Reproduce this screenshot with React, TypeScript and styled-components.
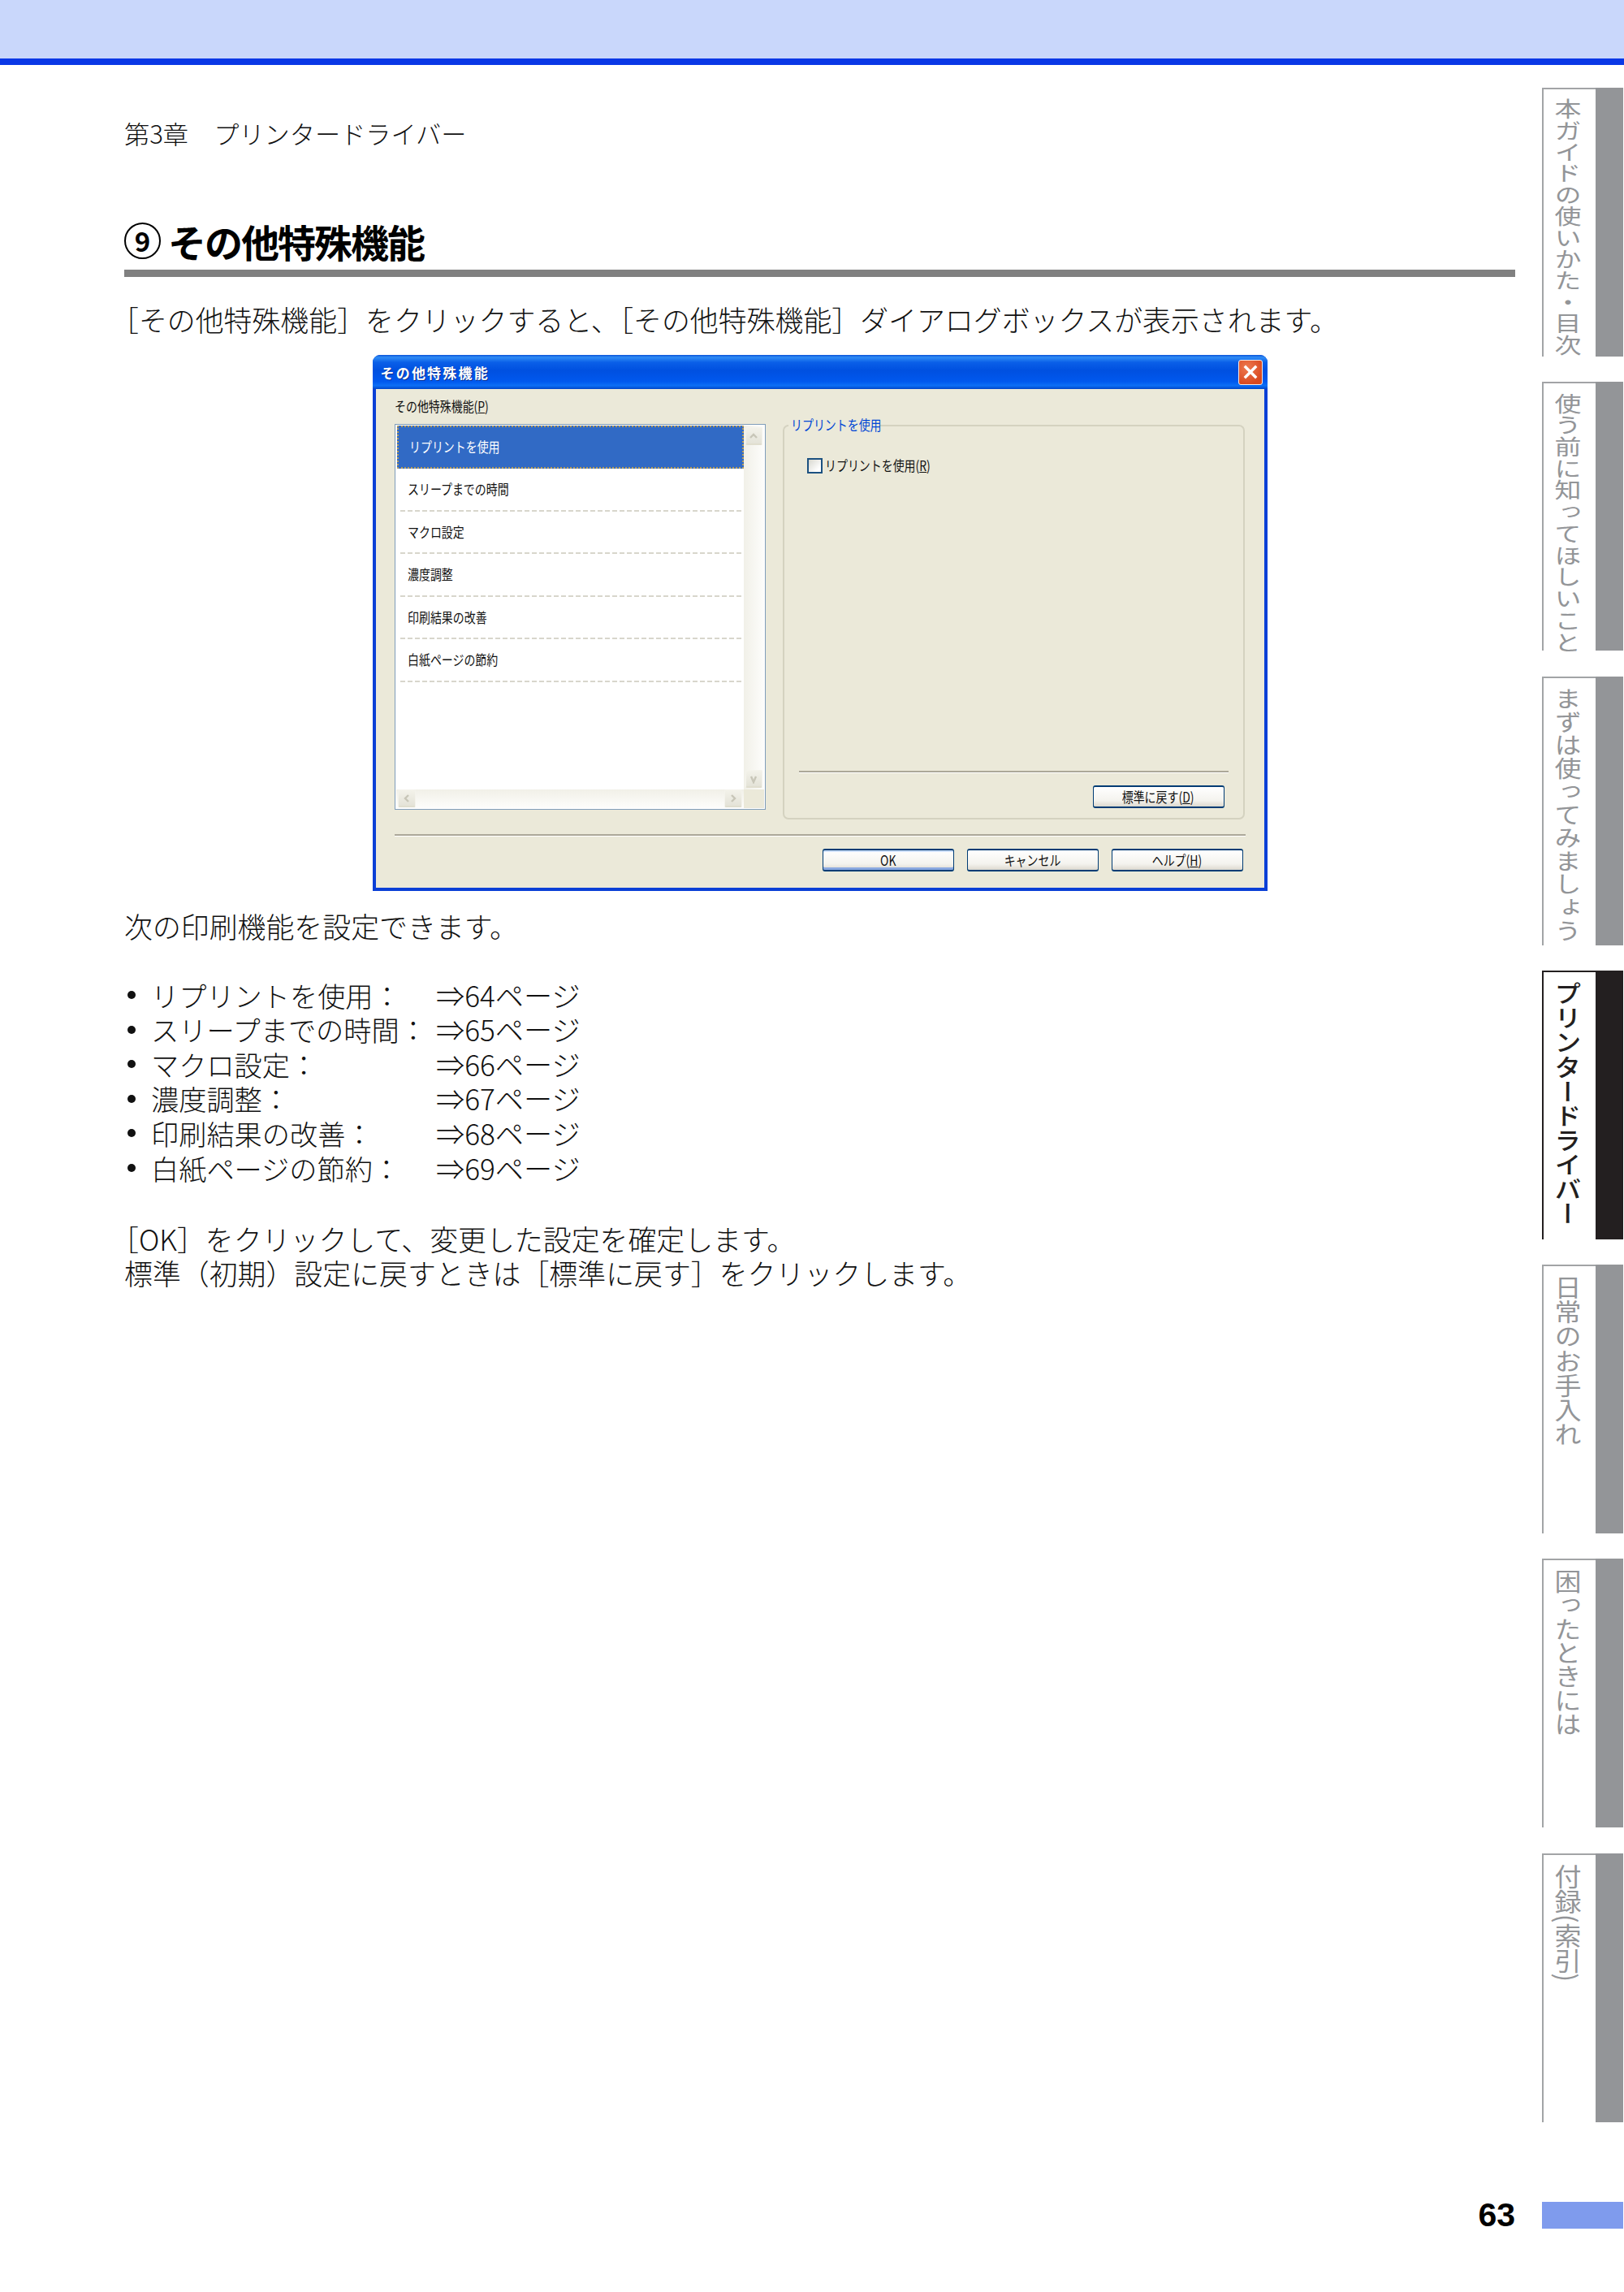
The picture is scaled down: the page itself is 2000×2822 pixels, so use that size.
import React from 'react';
import styled, { createGlobalStyle } from 'styled-components';

const GlobalStyle = createGlobalStyle`
  html, body {
    margin: 0;
    padding: 0;
    background: #fff;
  }

  body {
    font-family: "Noto Sans CJK JP", "Liberation Sans", sans-serif;
    color: #111;
  }
`;

const Page = styled.div`
  width: 2000px;
  height: 2822px;
  overflow: hidden;
  background: #fff;
`;

const TopBand = styled.div`
  height: 72px;
  background: #c9d7fb;
  border-bottom: 8px solid #0a38e6;
`;

const Layout = styled.div`
  display: flex;
  align-items: flex-start;
`;

const Main = styled.main`
  width: 1713px;
  margin-left: 153px;
`;

const Chapter = styled.div`
  margin-top: 64px;
  font-size: 31.2px;
  font-weight: 300;
  line-height: 40px;
  white-space: pre;
`;

const Heading = styled.h2`
  display: flex;
  align-items: center;
  height: 60px;
  margin: 82px 0 0;
  border-bottom: 9px solid #808080;
  padding-bottom: 6px;
  font-size: 47px;
  font-weight: 700;
  letter-spacing: -2px;
  color: #000;
`;

const HeadingNumber = styled.span`
  display: flex;
  flex: none;
  align-items: center;
  justify-content: center;
  width: 45px;
  height: 45px;
  margin-right: 9px;
  box-sizing: border-box;
  border: 2px solid #000;
  border-radius: 50%;
  font-size: 33px;
  line-height: 1;
  letter-spacing: 0;
`;

const Para = styled.p<{ $top: number; $bracket?: boolean }>`
  margin: ${(p) => p.$top}px 0 0;
  font-size: 34.9px;
  font-weight: 300;
  line-height: 42px;
  white-space: nowrap;
  text-indent: ${(p) => (p.$bracket ? -17 : 0)}px;
`;

const Features = styled.ul`
  margin: 42.7px 0 0;
  padding: 0;
  list-style: none;
  font-size: 35.2px;
  font-weight: 300;
  line-height: 42.6px;
`;

const Feature = styled.li`
  display: grid;
  grid-template-columns: 33px 351px auto;
  align-items: center;
  white-space: nowrap;
`;

const FeatureLabel = styled.span`
  font-size: 34.2px;
`;

const Bullet = styled.span`
  width: 10px;
  height: 10px;
  margin-left: 4px;
  border-radius: 50%;
  background: #111;
`;

/* dialog */

const Dialog = styled.div`
  display: flex;
  flex-direction: column;
  width: 1102px;
  height: 660px;
  margin: 23px auto 0;
  box-sizing: border-box;
  border-radius: 9px 9px 0 0;
  background: #0a3fd6;
  overflow: hidden;
`;

const TitleBar = styled.div`
  display: flex;
  flex: none;
  align-items: center;
  justify-content: space-between;
  height: 42px;
  padding: 0 6px 0 10px;
  box-sizing: border-box;
  background: linear-gradient(
    180deg,
    #0a52d8 0,
    #2f8cf5 7%,
    #0a5fe8 22%,
    #0050e0 45%,
    #0058ee 78%,
    #0c6ff6 90%,
    #0045c8 100%
  );
`;

const TitleText = styled.span`
  font-size: 17px;
  font-weight: 700;
  letter-spacing: 2.2px;
  line-height: 1;
  color: #fff;
  text-shadow: 1px 1px 0 #0a2f90;
`;

const CloseButton = styled.div`
  display: flex;
  align-items: center;
  justify-content: center;
  width: 30px;
  height: 31px;
  box-sizing: border-box;
  border: 1px solid #f4e8e2;
  border-radius: 3px;
  background: radial-gradient(circle at 35% 30%, #ee7a50, #d9481f 75%);
`;

const Client = styled.div`
  flex: 1;
  margin: 0 4px 4px;
  padding: 0 23px;
  background: #ebe9d9;
`;

const Caption = styled.div`
  height: 43px;
  padding-top: 9px;
  box-sizing: border-box;
  line-height: 25px;
`;

const Small = styled.span<{ $center?: boolean; $color?: string }>`
  display: inline-block;
  font-size: 17px;
  line-height: 1.2;
  white-space: nowrap;
  color: ${(p) => p.$color ?? '#111'};
  transform: scaleX(0.82);
  transform-origin: ${(p) => (p.$center ? 'center' : 'left')};
`;

const Panels = styled.div`
  display: flex;
  gap: 21px;
  align-items: flex-start;
`;

const ListBox = styled.div`
  display: grid;
  grid-template-columns: 1fr 25px;
  grid-template-rows: 1fr 23px;
  width: 457px;
  height: 475px;
  box-sizing: border-box;
  border: 1px solid #7f9db9;
  padding: 1px;
  background: #fff;
`;

const Rows = styled.div`
  display: flex;
  flex-direction: column;
  padding-left: 1px;
`;

const Row = styled.div<{ $selected?: boolean }>`
  display: flex;
  flex: none;
  align-items: center;
  height: ${(p) => (p.$selected ? 53 : 50.5)}px;
  padding-left: 13px;
  box-sizing: border-box;
  ${(p) => p.$selected && 'border: 2px dotted #b59c5c; background: #316ac5;'}
`;

const RowRule = styled.div`
  flex: none;
  height: 2px;
  margin-left: 4px;
  background: repeating-linear-gradient(90deg, #d8d6cc 0 6px, transparent 6px 9px);
`;

const VScroll = styled.div`
  display: flex;
  flex-direction: column;
  justify-content: space-between;
  padding: 2px;
  background: linear-gradient(90deg, #f1f0e8, #fdfdfb);
`;

const HScroll = styled.div`
  display: flex;
  justify-content: space-between;
  padding: 0 2px;
  background: linear-gradient(180deg, #f1f0e8, #fdfdfb);
`;

const ScrollCorner = styled.div`
  background: #ebe9d9;
`;

const ScrollBtn = styled.div<{ $wide?: boolean }>`
  display: flex;
  align-items: center;
  justify-content: center;
  width: ${(p) => (p.$wide ? 22 : 21)}px;
  height: 22px;
  box-sizing: border-box;
  border: 1px solid #f4f3ec;
  border-bottom: 2px solid #e0decf;
  border-radius: 2px;
  background: linear-gradient(180deg, #f3f2ea, #e4e3d8);
`;

const GroupBox = styled.div`
  position: relative;
  display: flex;
  flex-direction: column;
  width: 569px;
  height: 486px;
  margin-top: 1px;
  box-sizing: border-box;
  border: 2px solid #d4d2c0;
  border-radius: 7px;
`;

const Legend = styled.div`
  position: absolute;
  top: -13px;
  left: 5px;
  width: 112px;
  padding-left: 3px;
  box-sizing: border-box;
  background: #ebe9d9;
  line-height: 22px;
`;

const CheckRow = styled.div`
  display: flex;
  gap: 3px;
  align-items: center;
  height: 20px;
  margin: 38px 0 0 28px;
`;

const CheckBox = styled.div`
  flex: none;
  width: 19px;
  height: 19px;
  box-sizing: border-box;
  border: 2px solid #1c5180;
  background: linear-gradient(135deg, #d8d8d0, #fff 80%);
`;

const Rule = styled.div`
  flex: none;
  height: 2px;
  border-bottom: 1px solid #fff;
  background: #aca899;
`;

const GroupFooter = styled.div`
  display: flex;
  flex-direction: column;
  margin: auto 18px 12px;
`;

const GroupActions = styled.div`
  display: flex;
  justify-content: flex-end;
  margin-top: 15px;
  padding-right: 5px;
`;

const XpButton = styled.div<{ $default?: boolean }>`
  display: flex;
  align-items: center;
  justify-content: center;
  width: 162px;
  height: 28px;
  box-sizing: border-box;
  border: solid #003c74;
  border-width: 2px 1px;
  border-radius: 3px;
  background: linear-gradient(180deg, #fff, #f4f3ee 70%, #dcd8ce);
  ${(p) => p.$default && 'box-shadow: inset 0 -3px 0 #8aa8e0, inset 0 2px 0 #cfe0fb;'}
`;

const DialogRule = styled(Rule)`
  margin-top: 18px;
`;

const DialogActions = styled.div`
  display: flex;
  gap: 16px;
  justify-content: flex-end;
  margin-top: 15px;
  padding-right: 3px;
`;

/* side tabs */

const Side = styled.aside`
  display: flex;
  flex-direction: column;
  width: 100px;
  margin: 28px 0 0 33px;
`;

const Tabs = styled.nav`
  display: flex;
  flex-direction: column;
  gap: 31.3px;
`;

const Tab = styled.div<{ $active?: boolean }>`
  display: flex;
  height: 331px;
  box-sizing: border-box;
  border: solid ${(p) => (p.$active ? '#231f20' : '#a2a4a6')};
  border-width: 2px 0 0 2px;
`;

const TabFace = styled.div`
  flex: none;
  width: 64px;
  padding-top: 11px;
  box-sizing: border-box;
`;

const TabLabel = styled.div<{ $squeeze: number; $active?: boolean }>`
  writing-mode: vertical-rl;
  font-size: 33px;
  font-weight: ${(p) => (p.$active ? 500 : 400)};
  line-height: 60px;
  white-space: nowrap;
  color: ${(p) => (p.$active ? '#231f20' : '#939598')};
  transform: scaleY(${(p) => p.$squeeze});
  transform-origin: top;
`;

const TabEdge = styled.div<{ $active?: boolean }>`
  flex: 1;
  margin-top: -2px;
  background: ${(p) => (p.$active ? '#231f20' : '#939598')};
`;

const PageMark = styled.div`
  position: relative;
  height: 33px;
  margin-top: 98px;
  background: #7f9bed;
`;

const PageNumber = styled.span`
  position: absolute;
  top: -6px;
  right: 133px;
  font-family: "Liberation Sans", sans-serif;
  font-size: 41px;
  font-weight: 700;
  line-height: 45px;
  color: #000;
`;

const rows = ['リプリントを使用', 'スリープまでの時間', 'マクロ設定', '濃度調整', '印刷結果の改善', '白紙ページの節約'];

const features = [
  ['リプリントを使用：', '64'],
  ['スリープまでの時間：', '65'],
  ['マクロ設定：', '66'],
  ['濃度調整：', '67'],
  ['印刷結果の改善：', '68'],
  ['白紙ページの節約：', '69'],
];

const tabs = [
  { label: '本ガイドの使いかた・目次', squeeze: 0.8 },
  { label: '使う前に知ってほしいこと', squeeze: 0.81 },
  { label: 'まずは使ってみましょう', squeeze: 0.865 },
  { label: 'プリンタードライバー', squeeze: 0.91, active: true },
  { label: '日常のお手入れ', squeeze: 0.91 },
  { label: '困ったときには', squeeze: 0.89 },
  { label: '付録(索引)', squeeze: 0.94 },
];

const Chevron = ({ points }: { points: string }) => (
  <svg width="12" height="12" viewBox="0 0 12 12" fill="none" stroke="#c8c6b8" strokeWidth="2.4">
    <polyline points={points} />
  </svg>
);

export default function App() {
  return (
    <Page>
      <GlobalStyle />
      <TopBand />
      <Layout>
        <Main>
          <Chapter>第3章　プリンタードライバー</Chapter>
          <Heading>
            <HeadingNumber>9</HeadingNumber>その他特殊機能
          </Heading>
          <Para $top={31} $bracket>
            ［その他特殊機能］をクリックすると、［その他特殊機能］ダイアログボックスが表示されます。
          </Para>

          <Dialog>
            <TitleBar>
              <TitleText>その他特殊機能</TitleText>
              <CloseButton>
                <svg width="18" height="18" viewBox="0 0 18 18" stroke="#fff" strokeWidth="3.4" strokeLinecap="square">
                  <path d="M3 3 L15 15 M15 3 L3 15" />
                </svg>
              </CloseButton>
            </TitleBar>
            <Client>
              <Caption>
                <Small>
                  その他特殊機能(<u>P</u>)
                </Small>
              </Caption>
              <Panels>
                <ListBox>
                  <Rows>
                    {rows.map((row, i) => (
                      <React.Fragment key={row}>
                        <Row $selected={i === 0}>
                          <Small $color={i === 0 ? '#fff' : '#111'}>{row}</Small>
                        </Row>
                        {i > 0 && <RowRule />}
                      </React.Fragment>
                    ))}
                  </Rows>
                  <VScroll>
                    <ScrollBtn>
                      <Chevron points="2,8 6,4 10,8" />
                    </ScrollBtn>
                    <ScrollBtn>
                      <Chevron points="3,3 6,10 9,3" />
                    </ScrollBtn>
                  </VScroll>
                  <HScroll>
                    <ScrollBtn $wide>
                      <Chevron points="8,2 4,6 8,10" />
                    </ScrollBtn>
                    <ScrollBtn $wide>
                      <Chevron points="4,2 8,6 4,10" />
                    </ScrollBtn>
                  </HScroll>
                  <ScrollCorner />
                </ListBox>
                <GroupBox>
                  <Legend>
                    <Small $color="#0046d5">リプリントを使用</Small>
                  </Legend>
                  <CheckRow>
                    <CheckBox />
                    <Small>
                      リプリントを使用(<u>R</u>)
                    </Small>
                  </CheckRow>
                  <GroupFooter>
                    <Rule />
                    <GroupActions>
                      <XpButton>
                        <Small $center>
                          標準に戻す(<u>D</u>)
                        </Small>
                      </XpButton>
                    </GroupActions>
                  </GroupFooter>
                </GroupBox>
              </Panels>
              <DialogRule />
              <DialogActions>
                <XpButton $default>
                  <Small $center>OK</Small>
                </XpButton>
                <XpButton>
                  <Small $center>キャンセル</Small>
                </XpButton>
                <XpButton>
                  <Small $center>
                    ヘルプ(<u>H</u>)
                  </Small>
                </XpButton>
              </DialogActions>
            </Client>
          </Dialog>

          <Para $top={22}>次の印刷機能を設定できます。</Para>
          <Features>
            {features.map(([label, page]) => (
              <Feature key={page}>
                <Bullet />
                <FeatureLabel>{label}</FeatureLabel>
                <span>⇒{page}ページ</span>
              </Feature>
            ))}
          </Features>
          <Para $top={44.7} $bracket>
            ［OK］をクリックして、変更した設定を確定します。
          </Para>
          <Para $top={0}>標準（初期）設定に戻すときは［標準に戻す］をクリックします。</Para>
        </Main>

        <Side>
          <Tabs>
            {tabs.map((tab) => (
              <Tab key={tab.label} $active={tab.active}>
                <TabFace>
                  <TabLabel $squeeze={tab.squeeze} $active={tab.active}>
                    {tab.label}
                  </TabLabel>
                </TabFace>
                <TabEdge $active={tab.active} />
              </Tab>
            ))}
          </Tabs>
          <PageMark>
            <PageNumber>63</PageNumber>
          </PageMark>
        </Side>
      </Layout>
    </Page>
  );
}
